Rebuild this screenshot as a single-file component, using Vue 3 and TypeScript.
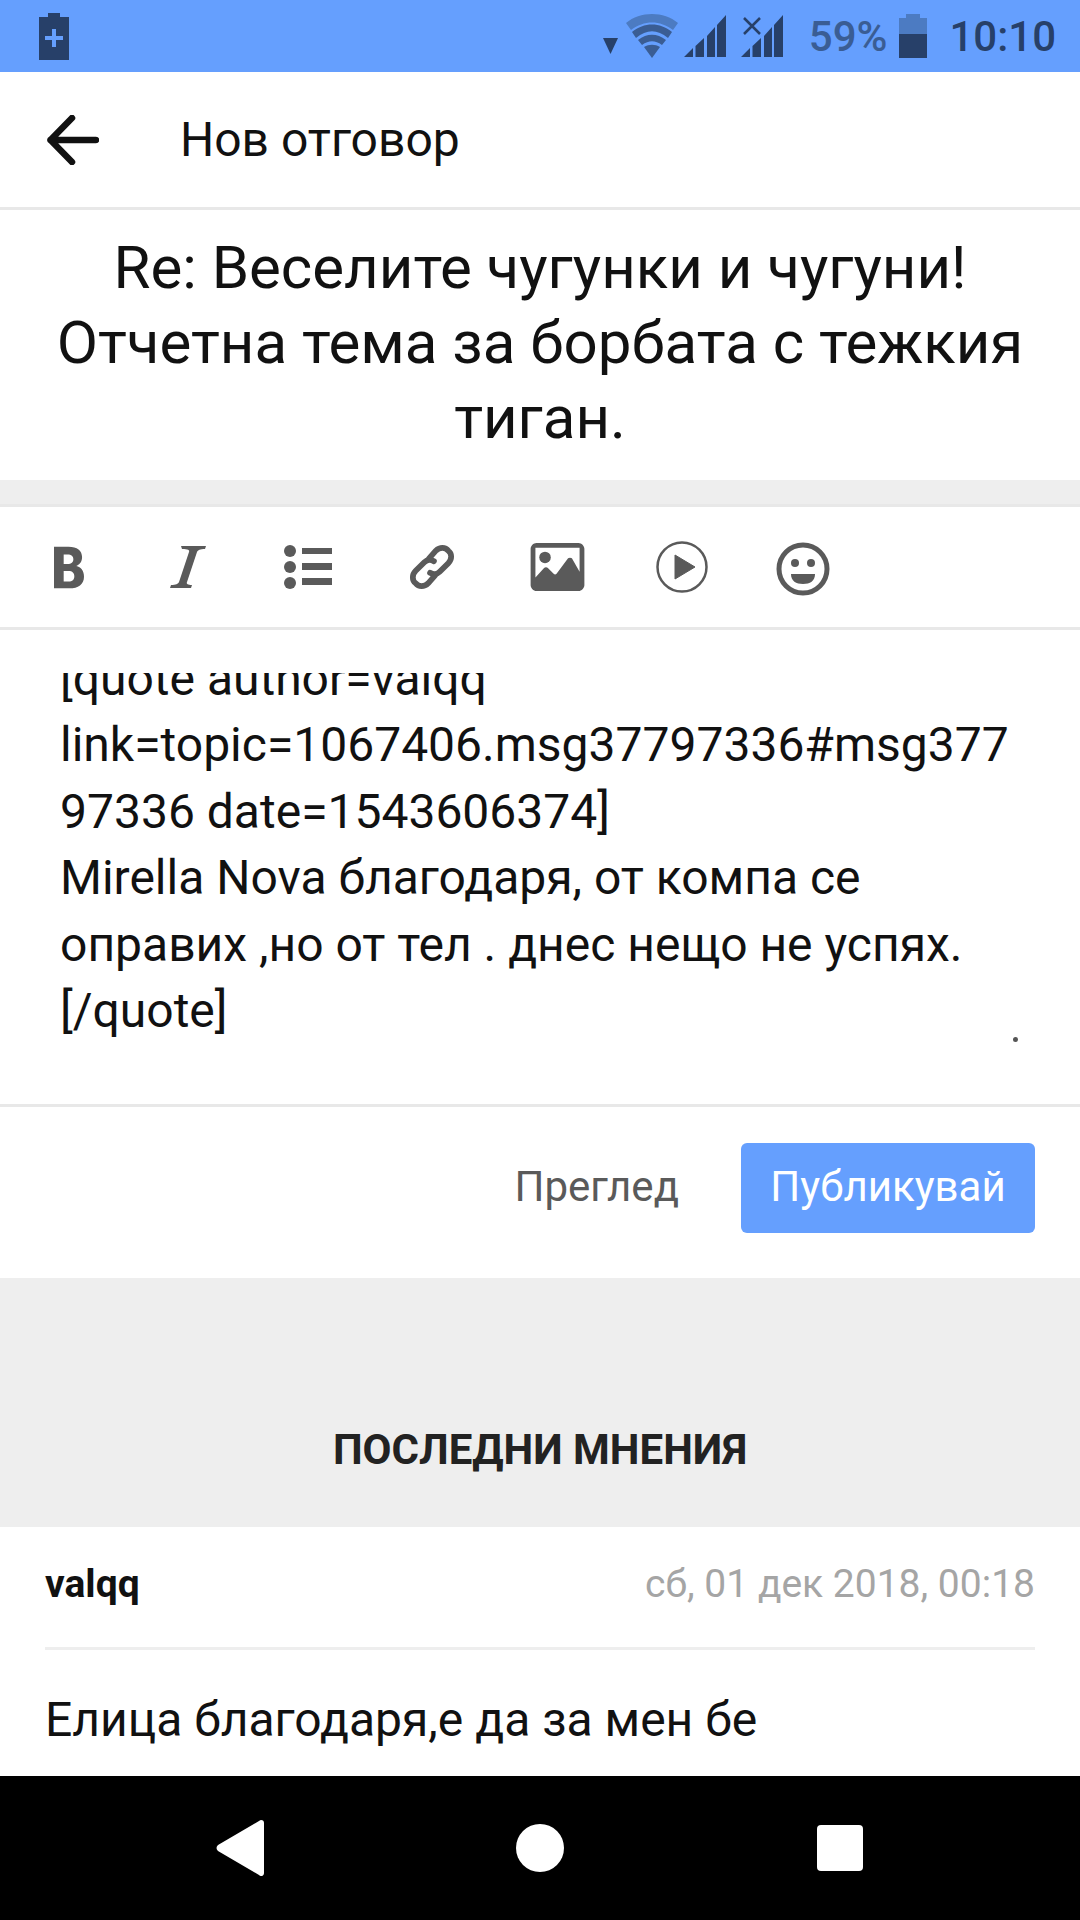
<script setup lang="ts">
const tools = ['b', 'i', 'l', 'k', 'p', 'v', 's'];
</script>

<template>
  <div class="screen">
    <div class="status">
      <svg class="charge" width="30" height="48" viewBox="0 0 30 48">
        <path d="M9 1h12v4h9v43H0V5h9z" fill="#274069" />
        <path d="M13 17h4v7h7v4h-7v7h-4v-7H6v-4h7z" fill="#659ffe" />
      </svg>
      <div class="status-right">
        <svg width="15" height="16" viewBox="0 0 15 16" class="drop"><path d="M0 0h15L7.500 16z" fill="#274069" /></svg>
        <svg width="52" height="44" viewBox="0 0 52 44" class="wifi">
          <path d="M0 9C14-3 38-3 52 9l-5 7C34 6 18 6 5 16z" fill="#4c7bc2" />
          <path d="M6 18C18 8 34 8 46 18l-4 6C31 15 21 15 10 24z" fill="#3a5d94" />
          <path d="M12 26c9-7 19-7 28 0l-4 5c-7-5-13-5-20 0z" fill="#3a5d94" />
          <path d="M18 33c5-3 11-3 16 0l-8 11z" fill="#3a5d94" />
        </svg>
        <svg width="42" height="44" viewBox="0 0 42 44" class="sig">
          <path d="M0 43 9 34V43zM11.500 32 20 24V43H11.500zM23 22 31 13V43H23zM33 11 42 1V43H33z" fill="#274069" />
        </svg>
        <svg width="42" height="44" viewBox="0 0 42 44" class="sig sig2">
          <path d="M0 43 9 34V43zM11.500 32 20 24V43H11.500zM23 22 31 13V43H23zM33 11 42 1V43H33z" fill="#274069" />
          <path d="M3 3 19 19M19 3 3 19" stroke="#274069" stroke-width="2.500" fill="none" transform="translate(0 1)" />
        </svg>
        <span class="pct">59%</span>
        <svg width="28" height="44" viewBox="0 0 28 44" class="batt">
          <path d="M7 0h14v4h7v16H0V4h7z" fill="#4c7bc2" />
          <path d="M0 20h28v24H0z" fill="#274069" />
        </svg>
        <span class="time">10:10</span>
      </div>
    </div>

    <header class="head">
      <svg width="52" height="50" viewBox="0 0 52 50" class="back">
        <path d="M25 3 3.500 25 25 47M3.500 25H49" fill="none" stroke="#111" stroke-width="6.500" stroke-linecap="round" stroke-linejoin="round" />
      </svg>
      <span class="head-title">Нов отговор</span>
    </header>

    <h1 class="topic">Re: Веселите чугунки и чугуни! Отчетна тема за борбата с тежкия тиган.</h1>

    <div class="gap"></div>

    <div class="toolbar">
      <span v-for="t in tools" :key="t" class="tool">
        <svg v-if="t === 'b'" width="30" height="43" viewBox="2 2 31 43">
          <path fill-rule="evenodd" d="M2 2h15c9 0 14 4 14 11 0 5-3 8-6 9 5 1 8 5 8 11 0 8-6 12-15 12H2zM12 10v10h4c4 0 6-2 6-5s-2-5-6-5zM12 27v11h5c4 0 6-2 6-5.500S21 27 17 27z" fill="#5a5a5a" />
        </svg>
        <svg v-else-if="t === 'i'" width="36" height="44" viewBox="0 0 36 44">
          <path d="M11 1h25l-1 3c-5 0-7 1-8 3L17 37c-1 2 1 3 5 3l-1 3H0l1-3c5 0 7-1 8-3L19 7c1-2-1-3-7-3z" fill="#5a5a5a" />
        </svg>
        <svg v-else-if="t === 'l'" width="48" height="44" viewBox="0 0 48 44">
          <circle cx="6" cy="6" r="6" fill="#5a5a5a" />
          <circle cx="6" cy="22" r="6" fill="#5a5a5a" />
          <circle cx="6" cy="38" r="6" fill="#5a5a5a" />
          <path d="M18 3h30v6H18zM18 18h30v7H18zM18 33h30v7H18z" fill="#5a5a5a" />
        </svg>
        <svg v-else-if="t === 'k'" width="46" height="46" viewBox="0 0 48 48">
          <g fill="none" stroke="#5a5a5a" stroke-width="6" stroke-linecap="round">
            <path d="M21 15 28 7c4-4 10-4 13 0 4 3 4 9 0 13l-9 9c-3 3-7 3-10 1" />
            <path d="M27 33 20 41c-4 4-10 4-13 0-4-3-4-9 0-13l9-9c3-3 7-3 10-1" />
          </g>
        </svg>
        <svg v-else-if="t === 'p'" width="55" height="48" viewBox="0 0 56 50">
          <path fill-rule="evenodd" d="M6 0h44c3 0 6 3 6 6v38c0 3-3 6-6 6H6c-3 0-6-3-6-6V6c0-3 3-6 6-6zM5 5v31l9-10c1-1 3-1 4 0l6 6c1 1 2 1 3 0l12-16c1-1 3-1 4 0l8 14V5z" fill="#5a5a5a" />
          <circle cx="15" cy="15" r="6" fill="#5a5a5a" />
        </svg>
        <svg v-else-if="t === 'v'" width="52" height="52" viewBox="0 0 52 52">
          <circle cx="26" cy="26" r="24.500" fill="none" stroke="#5a5a5a" stroke-width="2.500" />
          <path d="M19 14 39 26 19 38z" fill="#5a5a5a" stroke="#5a5a5a" stroke-linejoin="round" />
        </svg>
        <svg v-else width="54" height="54" viewBox="0 0 54 54" class="smile">
          <circle cx="27" cy="27" r="24" fill="none" stroke="#5a5a5a" stroke-width="5" />
          <circle cx="19" cy="21" r="4" fill="#5a5a5a" />
          <circle cx="35" cy="21" r="4" fill="#5a5a5a" />
          <path d="M15 32h24c0 7-5 10-12 10S15 39 15 32z" fill="#5a5a5a" />
        </svg>
      </span>
    </div>

    <div class="editor">
      <div class="editor-clip">
        <div class="editor-text">[quote author=valqq link=topic=1067406.msg37797336#msg37797336 date=1543606374]<br />Mirella Nova благодаря, от компа се оправих ,но от тел . днес нещо не успях.<br />[/quote]</div>
      </div>
      <span class="speck"></span>
    </div>

    <div class="actions">
      <span class="preview">Преглед</span>
      <span class="publish">Публикувай</span>
    </div>

    <div class="latest"><span>ПОСЛЕДНИ МНЕНИЯ</span></div>

    <section class="post">
      <div class="post-head">
        <b class="author">valqq</b>
        <span class="date">сб, 01 дек 2018, 00:18</span>
      </div>
      <p class="post-body">Елица благодаря,е да за мен бе</p>
    </section>

    <nav class="nav">
      <svg width="48" height="56" viewBox="0 0 48 56"><path d="M45 0c2 0 3 1 3 3v50c0 3-3 4-5 2L2 31c-2-2-2-4 0-6L43 1c1-1 2-1 2-1z" fill="#fff" /></svg>
      <span class="nav-circle"></span>
      <span class="nav-square"></span>
    </nav>
  </div>
</template>

<style scoped>
.screen {
  width: 1080px;
  height: 1920px;
  display: flex;
  flex-direction: column;
  overflow: hidden;
  background: #fff;
  font-family: Roboto, "Noto Sans", sans-serif;
}
.status {
  height: 72px;
  flex: none;
  background: #659ffe;
  display: flex;
  align-items: center;
  justify-content: space-between;
  padding: 0 24px 0 39px;
}
.status-right { display: flex; align-items: center; height: 100%; }
.drop { margin-top: 19px; }
.wifi { margin-left: 8px; }
.sig { margin-left: 6px; }
.sig2 { margin-left: 15px; }
.pct { margin-left: 26px; font-size: 42px; font-weight: 500; color: #3a5d94; }
.batt { margin-left: 12px; }
.time { margin-left: 22px; font-size: 42px; font-weight: 500; color: #274069; }
.head {
  height: 138px;
  flex: none;
  border-bottom: 3px solid #e8e8e8;
  box-sizing: border-box;
  display: flex;
  align-items: center;
  padding-left: 47px;
}
.head-title { margin-left: 81px; font-size: 48px; color: #111; }
.topic {
  margin: 0;
  height: 270px;
  flex: none;
  box-sizing: border-box;
  padding: 20px 50px 0;
  font-size: 60px;
  line-height: 75px;
  font-weight: 400;
  text-align: center;
  color: #111;
}
.gap { height: 24px; flex: none; background: #eee; }
.toolbar {
  height: 126px;
  flex: none;
  box-sizing: border-box;
  border-top: 3px solid #e8e8e8;
  border-bottom: 3px solid #e8e8e8;
  display: flex;
  align-items: center;
  padding-left: 54px;
}
.tool { display: flex; align-items: center; }
.tool:nth-child(2) { margin-left: 86px; }
.tool:nth-child(3) { margin-left: 78px; }
.tool:nth-child(4) { margin-left: 77px; }
.tool:nth-child(5) { margin-left: 75px; }
.tool:nth-child(6) { margin-left: 71px; }
.tool:nth-child(7) { margin-left: 68px; }
.smile { margin-top: 3px; }
.editor {
  height: 477px;
  flex: none;
  box-sizing: border-box;
  border-bottom: 3px solid #e8e8e8;
  position: relative;
  padding: 43px 50px 0 60px;
}
.editor-clip { height: 400px; overflow: hidden; }
.editor-text {
  margin-top: -27px;
  font-family: Roboto, sans-serif;
  font-size: 48px;
  line-height: 66.400px;
  color: #111;
  overflow-wrap: anywhere;
}
.speck {
  position: absolute;
  left: 1013px;
  top: 407px;
  width: 5px;
  height: 5px;
  background: #555;
  border-radius: 50%;
}
.actions {
  height: 171px;
  flex: none;
  box-sizing: border-box;
  padding: 0 45px 10px 0;
  display: flex;
  align-items: center;
  justify-content: flex-end;
}
.preview { font-size: 42px; color: #5a5a5a; margin-right: 62px; padding-bottom: 3px; }
.publish {
  width: 294px;
  height: 90px;
  box-sizing: border-box;
  padding-bottom: 3px;
  border-radius: 6px;
  background: #659ffe;
  color: #fff;
  font-size: 42px;
  display: flex;
  align-items: center;
  justify-content: center;
}
.latest {
  height: 249px;
  flex: none;
  background: #eee;
  display: flex;
  justify-content: center;
  align-items: flex-end;
  padding-bottom: 53px;
  box-sizing: border-box;
  font-size: 42px;
  font-weight: 700;
  color: #222;
}
.post { flex: 1; padding: 0 45px; overflow: hidden; }
.post-head {
  height: 123px;
  display: flex;
  align-items: center;
  justify-content: space-between;
  border-bottom: 3px solid #eee;
  padding-bottom: 7px;
  box-sizing: border-box;
}
.author { font-size: 39px; color: #111; }
.date { font-size: 39px; color: #a5a5a5; }
.post-body { margin: 0; padding-top: 42px; font-size: 48px; line-height: 56px; color: #111; }
.nav {
  height: 144px;
  flex: none;
  background: #000;
  display: flex;
  align-items: center;
  padding-left: 216px;
}
.nav-circle { width: 48px; height: 48px; border-radius: 50%; background: #fff; margin-left: 252px; }
.nav-square { width: 46px; height: 46px; border-radius: 4px; background: #fff; margin-left: 253px; }
</style>
